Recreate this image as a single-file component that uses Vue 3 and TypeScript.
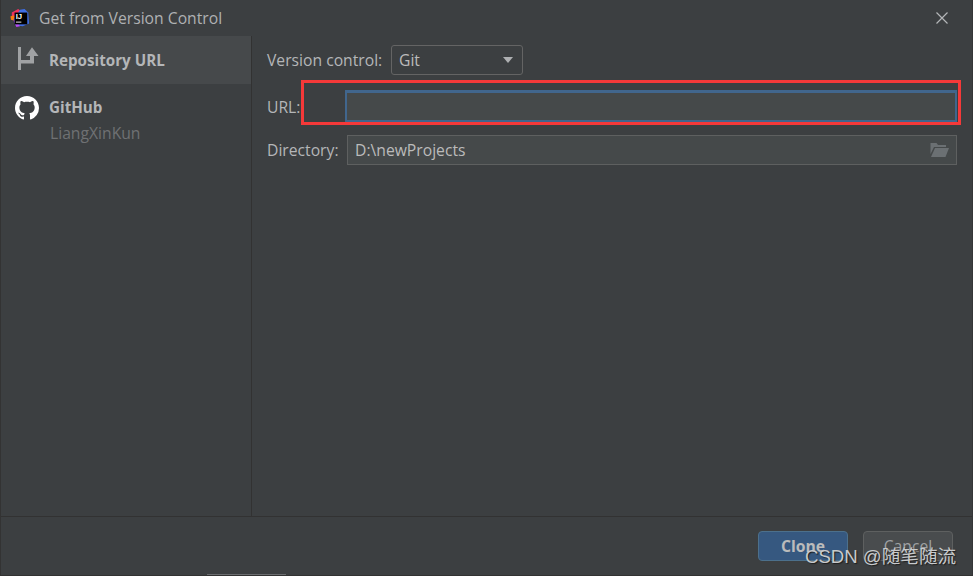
<script setup lang="ts">
const title = 'Get from Version Control'
</script>

<template>
  <div class="window">
    <header class="titlebar">
      <svg class="logo" width="20" height="20" viewBox="0 0 22 22">
        <path d="M2 5 L9 1 L13 4 L5 11 L2 10Z" fill="#f2315e" />
        <path d="M0.5 9 L5 8 L5 14 L1 13Z" fill="#f97a12" />
        <path d="M11 2 L16 1 L20 5 L21 17 L14 20 L6 19 L4 13Z" fill="#3f6fe6" />
        <path d="M4 14 L7 21 L11 20 L6 13Z" fill="#b74af7" />
        <rect x="5" y="5" width="14" height="13" fill="#000" />
        <text x="6.2" y="12.5" class="logo-text">IJ</text>
        <rect x="6.5" y="15" width="6" height="1" fill="#fff" />
      </svg>
      <span class="title">{{ title }}</span>
      <svg class="close" width="14" height="14" viewBox="0 0 14 14">
        <path d="M1.5 1.5 L12.5 12.5 M12.5 1.5 L1.5 12.5" stroke="#b4b6b8" stroke-width="1.2" fill="none" />
      </svg>
    </header>

    <div class="body">
      <aside class="sidebar">
        <div class="nav-item selected">
          <svg class="nav-icon arrow" width="22" height="24" viewBox="0 0 22 24">
            <path d="M0 0 H3 V13 H12 V9 H8 L14 0.3 L20.5 9 H16 V16.5 H3 V23 H0Z" fill="#a0a2a4" />
          </svg>
          <span class="nav-label">Repository URL</span>
        </div>
        <div class="nav-item github">
          <svg class="nav-icon" width="24" height="24" viewBox="0 0 16 16">
            <path fill="#fff" d="M8 0C3.58 0 0 3.58 0 8c0 3.54 2.29 6.53 5.47 7.59.4.07.55-.17.55-.38 0-.19-.01-.82-.01-1.49-2.01.37-2.53-.49-2.69-.94-.09-.23-.48-.94-.82-1.13-.28-.15-.68-.52-.01-.53.63-.01 1.08.58 1.23.82.72 1.21 1.87.87 2.33.66.07-.52.28-.87.51-1.07-1.78-.2-3.64-.89-3.64-3.95 0-.87.31-1.59.82-2.15-.08-.2-.36-1.02.08-2.12 0 0 .67-.21 2.2.82.64-.18 1.32-.27 2-.27s1.36.09 2 .27c1.53-1.04 2.2-.82 2.2-.82.44 1.1.16 1.92.08 2.12.51.56.82 1.27.82 2.15 0 3.07-1.87 3.75-3.65 3.95.29.25.54.73.54 1.48 0 1.07-.01 1.93-.01 2.2 0 .21.15.46.55.38A8.01 8.01 0 0 0 16 8c0-4.42-3.58-8-8-8z" />
          </svg>
          <div class="account">
            <span class="nav-label">GitHub</span>
            <span class="nav-sub">LiangXinKun</span>
          </div>
        </div>
      </aside>

      <main class="form">
        <div class="row row-combo">
          <label class="label label-vc">Version control:</label>
          <div class="combo">
            <span>Git</span>
            <span class="caret"></span>
          </div>
        </div>
        <div class="row row-url">
          <label class="label label-url">URL:</label>
          <div class="input focused"></div>
        </div>
        <div class="row row-dir">
          <label class="label label-dir">Directory:</label>
          <div class="input dir">
            <span>D:\newProjects</span>
            <svg width="20" height="16" viewBox="0 0 20 16">
              <path d="M0.5 3 V1 H6.5 L8 3 H16 V5 H4 L0.5 12Z" fill="#6b7073" />
              <path d="M1 15 L5 6 H19 L15.5 15Z" fill="#6b7073" />
            </svg>
          </div>
        </div>
      </main>
    </div>

    <footer class="footer">
      <button class="btn primary">Clone</button>
      <button class="btn">Cancel</button>
    </footer>

    <div class="edge-tab"></div>
    <div class="annotation"></div>
    <div class="watermark">CSDN @随笔随流</div>
  </div>
</template>

<style>
html, body { margin: 0; background: #3c3f41; }
</style>

<style scoped>
.window {
  position: relative;
  width: 973px;
  height: 576px;
  box-sizing: border-box;
  display: flex;
  flex-direction: column;
  background: #3c3f41;
  border-left: 1px solid #333333;
  border-right: 1px solid #343638;
  border-bottom: 1px solid #323232;
  overflow: hidden;
  font-family: "Open Sans", "Noto Sans", "Noto Sans CJK SC", sans-serif;
  font-size: 15.7px;
  color: #bbbbbb;
}
.titlebar {
  height: 36px;
  flex: none;
  display: flex;
  align-items: center;
  padding: 0 23px 0 9px;
  box-sizing: border-box;
}
.logo { flex: none; margin-top: -1px; }
.logo-text { font: bold 8.5px "Liberation Sans", sans-serif; fill: #fff; }
.title { margin-left: 9px; flex: 1; color: #afb1b3; }
.close { flex: none; }
.body { flex: 1; display: flex; min-height: 0; }
.sidebar {
  width: 251px;
  flex: none;
  box-sizing: border-box;
  border-right: 1px solid #323232;
}
.nav-item {
  display: flex;
  align-items: center;
  gap: 9px;
  height: 48px;
  padding-left: 17px;
  box-sizing: border-box;
}
.selected { background: #46494b; }
.arrow { margin-top: -2px; }
.github { align-items: flex-start; padding: 12px 0 0 14px; gap: 10px; }
.nav-label { font-weight: 700; font-size: 15.2px; color: #b4b6b8; }
.account { display: flex; flex-direction: column; gap: 5px; margin-top: 1px; }
.nav-sub { color: #6f7173; margin-left: 1px; }
.form { flex: 1; padding: 9px 15px 0; box-sizing: border-box; }
.row { display: flex; align-items: center; }
.row-combo { height: 30px; }
.row-url { height: 32px; margin-top: 15px; }
.row-dir { height: 30px; margin-top: 13px; }
.label { flex: none; color: #b4b6b8; }
.label-vc { width: 124px; }
.label-url { width: 78px; padding-top: 2px; }
.label-dir { width: 80px; }
.combo {
  width: 132px;
  height: 30px;
  box-sizing: border-box;
  border: 1px solid #646464;
  border-radius: 3px;
  background: #3c3f41;
  display: flex;
  align-items: center;
  justify-content: space-between;
  padding: 0 9px 0 7px;
}
.caret {
  width: 0;
  height: 0;
  border-left: 5px solid transparent;
  border-right: 5px solid transparent;
  border-top: 6px solid #aeb0b2;
}
.input {
  flex: 1;
  height: 100%;
  box-sizing: border-box;
  background: #45494a;
  border: 1px solid #5e6060;
}
.focused {
  border: 2px solid #41668d;
  border-top-width: 3px;
}
.dir {
  display: flex;
  align-items: center;
  justify-content: space-between;
  padding: 0 6px 0 7px;
}
.footer {
  height: 59px;
  flex: none;
  box-sizing: border-box;
  border-top: 1px solid #323232;
  display: flex;
  justify-content: flex-end;
  align-items: center;
  gap: 15px;
  padding: 0 19px 1px 0;
}
.btn {
  width: 90px;
  height: 30px;
  box-sizing: border-box;
  border: 1px solid #5e6060;
  border-radius: 4px;
  background: #494c4e;
  color: #9fa1a3;
  font: inherit;
  padding: 0;
}
.primary {
  background: #365880;
  border-color: #4c708c;
  color: #bbbbbb;
  font-weight: 700;
}
.edge-tab {
  position: absolute;
  left: 206px;
  bottom: -1px;
  width: 79px;
  height: 2px;
  background: #6b6d70;
}
.annotation {
  position: absolute;
  left: 300px;
  top: 80px;
  width: 660px;
  height: 45px;
  box-sizing: border-box;
  border: 3px solid #f53939;
  pointer-events: none;
}
.watermark {
  position: absolute;
  left: 804px;
  top: 544px;
  font-family: "Liberation Sans", "Noto Sans CJK SC", sans-serif;
  font-size: 18.6px;
  line-height: 26px;
  white-space: nowrap;
  color: #c8cacc;
  text-shadow: 1px 1px 1px #1e1e1e;
}
</style>
